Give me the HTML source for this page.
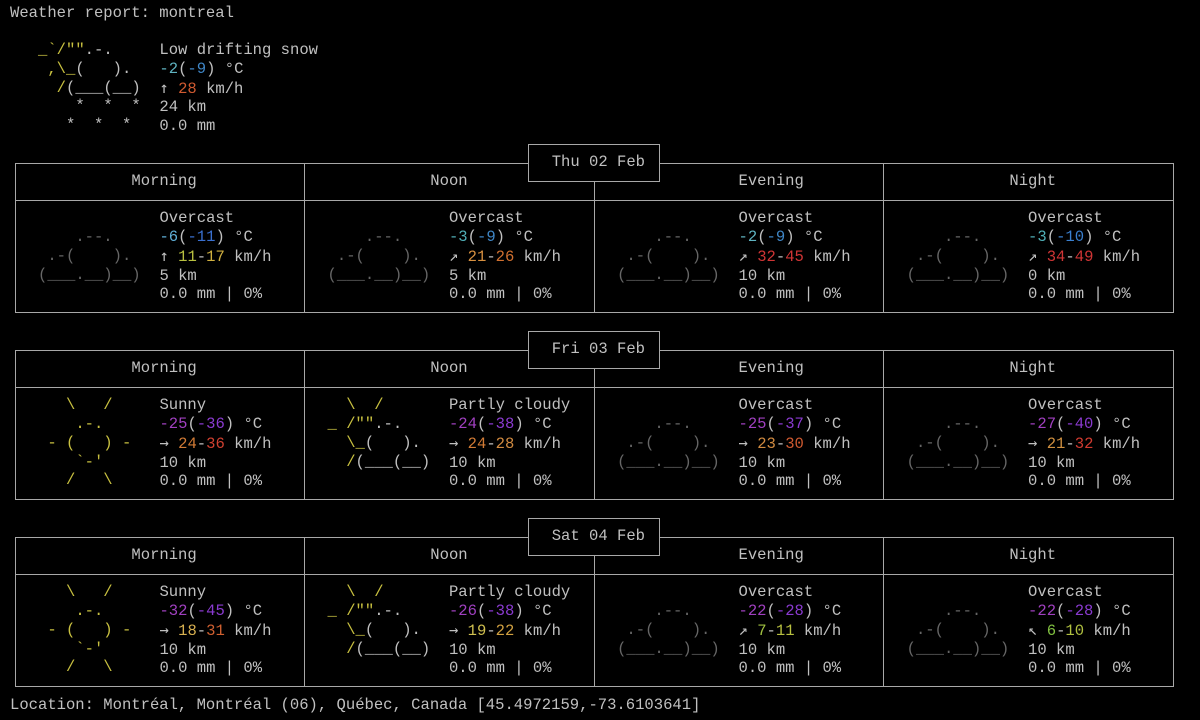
<!DOCTYPE html>
<html><head><meta charset="utf-8"><style>
html,body{margin:0;padding:0;background:#000;width:1200px;height:720px;overflow:hidden}
body{position:relative;font-family:"Liberation Mono","DejaVu Sans Mono",monospace;font-size:15.56px;color:#c0c0c0}
.t{position:absolute;white-space:pre;line-height:18.7px}
.h{position:absolute;height:1px;background:#a8a8a8}
.v{position:absolute;width:1px;background:#a8a8a8}
.y{color:#c8c040}.g{color:#666}
.a{display:inline-block;width:9.34px;font-family:"DejaVu Sans Mono",monospace}
</style></head><body>
<div class="t" style="left:10px;top:3.7px">Weather report: montreal</div>
<div class="t" style="left:28.7px;top:41.1px"><span class="y"> _`/""</span>.-.
<span class="y">  ,\_</span>(   ).
<span class="y">   /</span>(___(__)
     *  *  *
    *  *  *</div>
<div class="t" style="left:159.4px;top:41.1px">Low drifting snow
<span style="color:#5fb3c0">-2</span>(<span style="color:#3f87c8">-9</span>) °C
<span class="a">↑</span> <span style="color:#d05a30">28</span> km/h
24 km
0.0 mm</div>
<div id="days"></div>
<div class="t" style="left:10px;top:695.6px">Location: Montréal, Montréal (06), Québec, Canada [45.4972159,-73.6103641]</div>
<script>
var X=function(c){return 10+c*9.34},XC=function(c){return 14.67+c*9.34},Y=function(r){return 3.7+r*18.7},YC=function(r){return 13.05+r*18.7};
var ov='\n<span class="g">     .--.\n  .-(    ).\n (___.__)__)</span>';
var sun='<span class="y">    \\   /\n     .-.\n  - (   ) -\n     `-\'\n    /   \\</span>';
var pc='<span class="y">   \\  /\n _ /""</span>.-.\n<span class="y">   \\_</span>(   ).\n<span class="y">   /</span>(___(__)';
function s(c,t){return '<span style="color:'+c+'">'+t+'</span>'}
var P1='#a040c0',P2='#8a3ad0';
var days=[
 {d:'Thu 02 Feb',c:[
  [ov,'Overcast',s('#5fafd7','-6')+'('+s('#3a70d0','-11')+') °C','↑',s('#b8c040','11')+'-'+s('#d0b040','17'),'5 km'],
  [ov,'Overcast',s('#50b0b8','-3')+'('+s('#3f87c8','-9')+') °C','↗',s('#d79040','21')+'-'+s('#d07030','26'),'5 km'],
  [ov,'Overcast',s('#5fb3c0','-2')+'('+s('#3f87c8','-9')+') °C','↗',s('#d03535','32')+'-'+s('#d03535','45'),'10 km'],
  [ov,'Overcast',s('#50b0b8','-3')+'('+s('#3a80d0','-10')+') °C','↗',s('#d03535','34')+'-'+s('#d03535','49'),'0 km']]},
 {d:'Fri 03 Feb',c:[
  [sun,'Sunny',s(P1,'-25')+'('+s(P2,'-36')+') °C','→',s('#d07a35','24')+'-'+s('#d04030','36'),'10 km'],
  [pc,'Partly cloudy',s(P1,'-24')+'('+s(P2,'-38')+') °C','→',s('#d07a35','24')+'-'+s('#d08a40','28'),'10 km'],
  [ov,'Overcast',s(P1,'-25')+'('+s(P2,'-37')+') °C','→',s('#d08a40','23')+'-'+s('#d05a30','30'),'10 km'],
  [ov,'Overcast',s(P1,'-27')+'('+s(P2,'-40')+') °C','→',s('#d09040','21')+'-'+s('#d03a30','32'),'10 km']]},
 {d:'Sat 04 Feb',c:[
  [sun,'Sunny',s(P1,'-32')+'('+s(P2,'-45')+') °C','→',s('#d7b050','18')+'-'+s('#d06030','31'),'10 km'],
  [pc,'Partly cloudy',s(P1,'-26')+'('+s(P2,'-38')+') °C','→',s('#d0c050','19')+'-'+s('#d0a040','22'),'10 km'],
  [ov,'Overcast',s(P1,'-22')+'('+s(P2,'-28')+') °C','↗',s('#a0c040','7')+'-'+s('#b8c040','11'),'10 km'],
  [ov,'Overcast',s(P1,'-22')+'('+s(P2,'-28')+') °C','↖',s('#80c040','6')+'-'+s('#b0c040','10'),'10 km']]}];
var h='';
function H(c1,c2,r){h+='<div class="h" style="left:'+XC(c1)+'px;width:'+(XC(c2)-XC(c1)+1)+'px;top:'+YC(r)+'px"></div>'}
function V(c,r1,r2){h+='<div class="v" style="left:'+XC(c)+'px;top:'+YC(r1)+'px;height:'+(YC(r2)-YC(r1)+1)+'px"></div>'}
function T(c,r,txt){h+='<div class="t" style="left:'+X(c)+'px;top:'+Y(r)+'px">'+txt+'</div>'}
days.forEach(function(d,i){
 var R=7+i*10;
 H(55,69,R);V(55,R,R+2);V(69,R,R+2);H(55,69,R+2);
 H(0,55,R+1);H(69,124,R+1);
 H(0,124,R+3);H(0,124,R+9);
 [0,31,93,124].forEach(function(c){V(c,R+1,R+9)});V(62,R+2,R+9);
 T(58,R+1,d.d);T(13,R+2,'Morning');T(45,R+2,'Noon');T(78,R+2,'Evening');T(107,R+2,'Night');
 d.c.forEach(function(c,j){var c0=j*31;
  T(c0+2,R+4,c[0]);
  T(c0+16,R+4,c[1]+'\n'+c[2]+'\n<span class="a">'+c[3]+'</span> '+c[4]+' km/h\n'+c[5]+'\n0.0 mm | 0%');
 });
});
document.getElementById('days').innerHTML=h;
</script>
</body></html>
